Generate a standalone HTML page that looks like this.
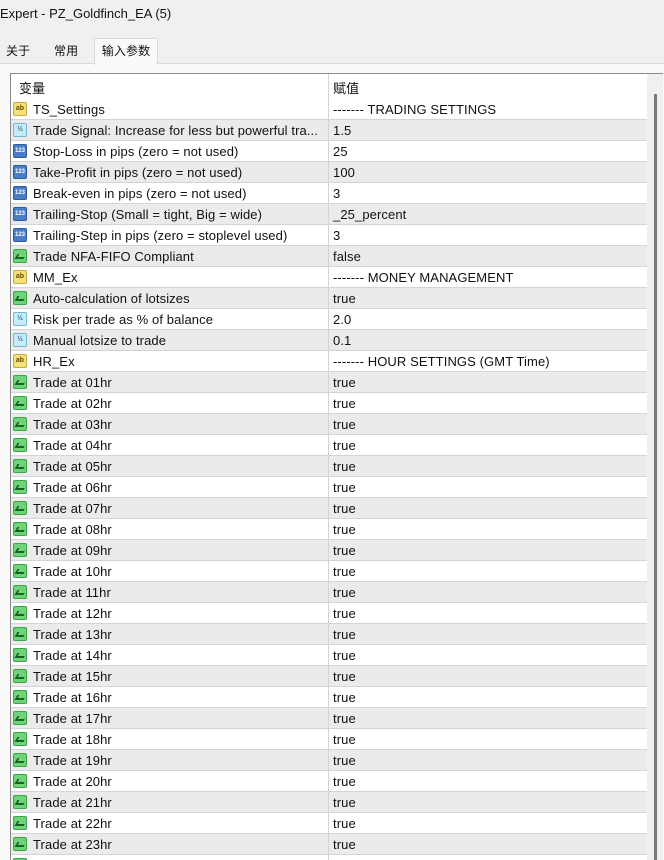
<!DOCTYPE html>
<html><head><meta charset="utf-8"><style>
html,body{margin:0;width:664px;height:860px;overflow:hidden}
body{background:#f0f0f0;font-family:"Liberation Sans","Noto Sans CJK SC",sans-serif;font-size:13px;letter-spacing:0.1px;color:#111;position:relative}
.title{position:absolute;left:0;top:6px;font-size:13px;letter-spacing:0}
.tab{position:absolute;top:40px;height:24px;line-height:22px;font-size:12px}
.active{background:#f9f9f9;border:1px solid #d9d9d9;border-bottom:none;left:94px;width:62px;text-align:center;top:38px;height:26px;line-height:24px}
.panel{position:absolute;left:0;top:63px;width:664px;height:797px;background:#f9f9f9;border-top:1px solid #d9d9d9}
.box{position:absolute;left:10px;top:73px;width:652px;height:787px;border-top:1px solid #8a8a8a;border-left:1px solid #8a8a8a;background:#fff;overflow:hidden}
.hdr{position:absolute;left:0;top:0;width:636px;height:25px;background:#fff}
.hdr span{position:absolute;top:4px}
.row{position:absolute;left:0;width:636px;height:20px;border-bottom:1px solid #d4d4d4;white-space:nowrap}
.g{background:#ebebeb}
.row .n{position:absolute;left:22px;top:3px}
.row .v{position:absolute;left:322px;top:3px}
.ic{position:absolute;left:2px;top:3px;width:14px;height:14px;box-sizing:border-box;border-radius:2px;font-size:7px;line-height:12px;text-align:center;font-weight:bold;letter-spacing:0}
.ab{background:#f3e27a;border:1px solid #c9a93a;color:#6a4b00}
.hf{background:#c8ecf7;border:1px solid #6fb9d6;color:#2a6f9a}
.nm{background:#4a7cc8;border:1px solid #2c5aa0;color:#fff;font-size:6px}
.bo{background:#6fd37a;border:1px solid #3aa449}
.bo:after{content:"";position:absolute;left:2px;top:4px;width:7px;height:3px;border-left:2px solid #16631f;border-bottom:2px solid #16631f;transform:skewX(-30deg)}
.div{position:absolute;left:317px;top:0;width:1px;height:800px;background:#d4d4d4}
.sb{position:absolute;left:636px;top:0;width:16px;height:800px;background:#f0f0f0;z-index:5}
.th{position:absolute;left:7px;top:20px;width:3px;height:780px;background:#7a7a7a}
</style></head><body>
<div class="title">Expert - PZ_Goldfinch_EA (5)</div>
<div class="panel"></div>
<div class="tab" style="left:6px">关于</div>
<div class="tab" style="left:54px">常用</div>
<div class="tab active">输入参数</div>
<div class="box">
<div class="hdr"><span style="left:8px">变量</span><span style="left:322px">赋值</span></div>
<div id="rows"></div>
<div class="div"></div>
<div class="sb"><div class="th"></div></div>
</div>
<script>
var d=[["ab","TS_Settings","------- TRADING SETTINGS"],["hf","Trade Signal: Increase for less but powerful tra...","1.5"],["nm","Stop-Loss in pips (zero = not used)","25"],["nm","Take-Profit in pips (zero = not used)","100"],["nm","Break-even in pips (zero = not used)","3"],["nm","Trailing-Stop (Small = tight, Big = wide)","_25_percent"],["nm","Trailing-Step in pips (zero = stoplevel used)","3"],["bo","Trade NFA-FIFO Compliant","false"],["ab","MM_Ex","------- MONEY MANAGEMENT"],["bo","Auto-calculation of lotsizes","true"],["hf","Risk per trade as % of balance","2.0"],["hf","Manual lotsize to trade","0.1"],["ab","HR_Ex","------- HOUR SETTINGS (GMT Time)"]];
for(var h=1;h<=24;h++)d.push(["bo","Trade at "+(h<10?"0":"")+h+"hr","true"]);
var t={ab:"ab",hf:"½",nm:"123",bo:""},s="";
d.forEach(function(r,i){s+='<div class="row'+(i%2?' g':'')+'" style="top:'+(25+21*i)+'px"><div class="ic '+r[0]+'">'+t[r[0]]+'</div><span class="n">'+r[1]+'</span><span class="v">'+r[2]+'</span></div>';});
document.getElementById("rows").innerHTML=s;
</script>
</body></html>
